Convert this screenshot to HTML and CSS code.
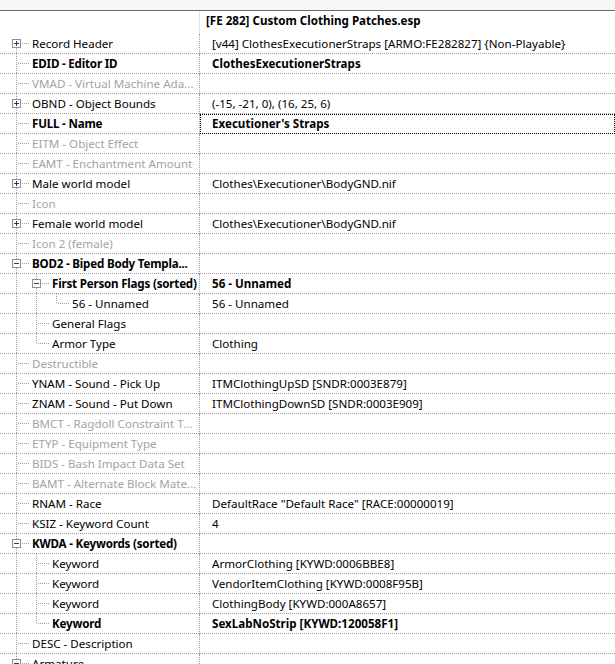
FILE: index.html
```html
<!DOCTYPE html>
<html>
<head>
<meta charset="utf-8">
<link rel="stylesheet" href="styles.css">
</head>
<body>
<svg class="defs" width="0" height="0" aria-hidden="true">
  <defs>
    <symbol id="v" viewBox="0 0 20 20">
      <line class="dl" x1="10.5" y1="0" x2="10.5" y2="20"/>
    </symbol>
    <symbol id="tee" viewBox="0 0 26 20">
      <line class="dl" x1="10.5" y1="0" x2="10.5" y2="20"/>
      <line class="dl" x1="12" y1="9.5" x2="24" y2="9.5"/>
    </symbol>
    <symbol id="ell" viewBox="0 0 26 20">
      <line class="dl" x1="10.5" y1="0" x2="10.5" y2="10"/>
      <line class="dl" x1="12" y1="9.5" x2="24" y2="9.5"/>
    </symbol>
    <symbol id="plus-first" viewBox="0 0 26 20">
      <line class="dl" x1="10.5" y1="14" x2="10.5" y2="20"/>
      <line class="dl" x1="16" y1="9.5" x2="24" y2="9.5"/>
      <rect class="box" x="6.5" y="5.5" width="8" height="8"/>
      <rect class="sign" x="8" y="9" width="5" height="1"/>
      <rect class="sign" x="10" y="7" width="1" height="5"/>
    </symbol>
    <symbol id="plus" viewBox="0 0 26 20">
      <line class="dl" x1="10.5" y1="0" x2="10.5" y2="5"/>
      <line class="dl" x1="10.5" y1="14" x2="10.5" y2="20"/>
      <line class="dl" x1="16" y1="9.5" x2="24" y2="9.5"/>
      <rect class="box" x="6.5" y="5.5" width="8" height="8"/>
      <rect class="sign" x="8" y="9" width="5" height="1"/>
      <rect class="sign" x="10" y="7" width="1" height="5"/>
    </symbol>
    <symbol id="minus" viewBox="0 0 26 20">
      <line class="dl" x1="10.5" y1="0" x2="10.5" y2="5"/>
      <line class="dl" x1="10.5" y1="14" x2="10.5" y2="20"/>
      <line class="dl" x1="16" y1="9.5" x2="24" y2="9.5"/>
      <rect class="box" x="6.5" y="5.5" width="8" height="8"/>
      <rect class="sign" x="8" y="9" width="5" height="1"/>
    </symbol>
  </defs>
</svg>

<div class="topbar"></div>
<div class="grid">
  <div class="head">
    <div class="hcell"></div>
    <div class="hval">[FE 282] Custom Clothing Patches.esp</div>
  </div>

  <div class="row"><div class="tree"><svg class="n"><use href="#plus-first"/></svg><span class="lbl">Record Header</span></div><div class="val">[v44] ClothesExecutionerStraps [ARMO:FE282827] {Non-Playable}</div></div>
  <div class="row"><div class="tree"><svg class="n"><use href="#tee"/></svg><span class="lbl b">EDID - Editor ID</span></div><div class="val b">ClothesExecutionerStraps</div></div>
  <div class="row"><div class="tree"><svg class="n"><use href="#tee"/></svg><span class="lbl g">VMAD - Virtual Machine Ada...</span></div><div class="val"></div></div>
  <div class="row"><div class="tree"><svg class="n"><use href="#plus"/></svg><span class="lbl">OBND - Object Bounds</span></div><div class="val">(-15, -21, 0), (16, 25, 6)</div></div>
  <div class="row"><div class="tree"><svg class="n"><use href="#tee"/></svg><span class="lbl b">FULL - Name</span></div><div class="val b focus">Executioner's Straps</div></div>
  <div class="row"><div class="tree"><svg class="n"><use href="#tee"/></svg><span class="lbl g">EITM - Object Effect</span></div><div class="val"></div></div>
  <div class="row"><div class="tree"><svg class="n"><use href="#tee"/></svg><span class="lbl g">EAMT - Enchantment Amount</span></div><div class="val"></div></div>
  <div class="row"><div class="tree"><svg class="n"><use href="#plus"/></svg><span class="lbl">Male world model</span></div><div class="val">Clothes\Executioner\BodyGND.nif</div></div>
  <div class="row"><div class="tree"><svg class="n"><use href="#tee"/></svg><span class="lbl g">Icon</span></div><div class="val"></div></div>
  <div class="row"><div class="tree"><svg class="n"><use href="#plus"/></svg><span class="lbl">Female world model</span></div><div class="val">Clothes\Executioner\BodyGND.nif</div></div>
  <div class="row"><div class="tree"><svg class="n"><use href="#tee"/></svg><span class="lbl g">Icon 2 (female)</span></div><div class="val"></div></div>
  <div class="row"><div class="tree"><svg class="n"><use href="#minus"/></svg><span class="lbl b">BOD2 - Biped Body Templa...</span></div><div class="val"></div></div>
  <div class="row"><div class="tree"><svg class="p"><use href="#v"/></svg><svg class="n"><use href="#minus"/></svg><span class="lbl b">First Person Flags (sorted)</span></div><div class="val b">56 - Unnamed</div></div>
  <div class="row"><div class="tree"><svg class="p"><use href="#v"/></svg><svg class="p"><use href="#v"/></svg><svg class="n"><use href="#ell"/></svg><span class="lbl">56 - Unnamed</span></div><div class="val">56 - Unnamed</div></div>
  <div class="row"><div class="tree"><svg class="p"><use href="#v"/></svg><svg class="n"><use href="#tee"/></svg><span class="lbl">General Flags</span></div><div class="val"></div></div>
  <div class="row"><div class="tree"><svg class="p"><use href="#v"/></svg><svg class="n"><use href="#ell"/></svg><span class="lbl">Armor Type</span></div><div class="val">Clothing</div></div>
  <div class="row"><div class="tree"><svg class="n"><use href="#tee"/></svg><span class="lbl g">Destructible</span></div><div class="val"></div></div>
  <div class="row"><div class="tree"><svg class="n"><use href="#tee"/></svg><span class="lbl">YNAM - Sound - Pick Up</span></div><div class="val">ITMClothingUpSD [SNDR:0003E879]</div></div>
  <div class="row"><div class="tree"><svg class="n"><use href="#tee"/></svg><span class="lbl">ZNAM - Sound - Put Down</span></div><div class="val">ITMClothingDownSD [SNDR:0003E909]</div></div>
  <div class="row"><div class="tree"><svg class="n"><use href="#tee"/></svg><span class="lbl g">BMCT - Ragdoll Constraint T...</span></div><div class="val"></div></div>
  <div class="row"><div class="tree"><svg class="n"><use href="#tee"/></svg><span class="lbl g">ETYP - Equipment Type</span></div><div class="val"></div></div>
  <div class="row"><div class="tree"><svg class="n"><use href="#tee"/></svg><span class="lbl g">BIDS - Bash Impact Data Set</span></div><div class="val"></div></div>
  <div class="row"><div class="tree"><svg class="n"><use href="#tee"/></svg><span class="lbl g">BAMT - Alternate Block Mate...</span></div><div class="val"></div></div>
  <div class="row"><div class="tree"><svg class="n"><use href="#tee"/></svg><span class="lbl">RNAM - Race</span></div><div class="val">DefaultRace "Default Race" [RACE:00000019]</div></div>
  <div class="row"><div class="tree"><svg class="n"><use href="#tee"/></svg><span class="lbl">KSIZ - Keyword Count</span></div><div class="val">4</div></div>
  <div class="row"><div class="tree"><svg class="n"><use href="#minus"/></svg><span class="lbl b">KWDA - Keywords (sorted)</span></div><div class="val"></div></div>
  <div class="row"><div class="tree"><svg class="p"><use href="#v"/></svg><svg class="n"><use href="#tee"/></svg><span class="lbl">Keyword</span></div><div class="val">ArmorClothing [KYWD:0006BBE8]</div></div>
  <div class="row"><div class="tree"><svg class="p"><use href="#v"/></svg><svg class="n"><use href="#tee"/></svg><span class="lbl">Keyword</span></div><div class="val">VendorItemClothing [KYWD:0008F95B]</div></div>
  <div class="row"><div class="tree"><svg class="p"><use href="#v"/></svg><svg class="n"><use href="#tee"/></svg><span class="lbl">Keyword</span></div><div class="val">ClothingBody [KYWD:000A8657]</div></div>
  <div class="row"><div class="tree"><svg class="p"><use href="#v"/></svg><svg class="n"><use href="#ell"/></svg><span class="lbl b">Keyword</span></div><div class="val b">SexLabNoStrip [KYWD:120058F1]</div></div>
  <div class="row"><div class="tree"><svg class="n"><use href="#tee"/></svg><span class="lbl">DESC - Description</span></div><div class="val"></div></div>
  <div class="row"><div class="tree"><svg class="n"><use href="#minus"/></svg><span class="lbl">Armature</span></div><div class="val"></div></div>
</div>
</body>
</html>
```

FILE: styles.css
```css
html, body {
  margin: 0;
  padding: 0;
  background: #ffffff;
}
body {
  font-family: "Noto Sans", "Open Sans", sans-serif;
  font-size: 11.6px;
  color: #000;
  overflow: hidden;
  height: 664px;
}
.defs {
  position: absolute;
  width: 0;
  height: 0;
  overflow: hidden;
}
.topbar {
  height: 10px;
  background: #f7f7f7;
  border-bottom: 1px solid #6b6b6b;
}
.grid {
  display: flex;
  flex-direction: column;
}
.head {
  display: grid;
  grid-template-columns: 200px 1fr;
  height: 23px;
}
.hcell {
  border-right: 1px solid #e3e3e3;
}
.hval {
  font-weight: bold;
  line-height: 20px;
  padding-left: 6px;
  white-space: nowrap;
}
.row {
  display: grid;
  grid-template-columns: 200px 1fr;
  height: 20px;
  background: linear-gradient(to right, #a0a0a0 50%, transparent 50%) 0 100% / 2px 1px repeat-x;
}
.tree {
  display: flex;
  align-items: flex-start;
  padding-left: 6px;
  border-right: 1px dotted #a0a0a0;
  overflow: hidden;
  white-space: nowrap;
}
.tree svg.p {
  width: 20px;
  height: 20px;
  flex: none;
}
.tree svg.n {
  width: 26px;
  height: 20px;
  flex: none;
}
.lbl {
  line-height: 19px;
  white-space: nowrap;
}
.lbl.b {
  letter-spacing: -0.2px;
}
.val {
  padding-left: 12px;
  line-height: 19px;
  white-space: nowrap;
  overflow: hidden;
}
.b { font-weight: bold; }
.g { color: #a3a3a3; }
.focus {
  outline: 1px dotted #000;
  outline-offset: -1px;
}
.dl {
  stroke: #a0a0a0;
  stroke-width: 1;
  stroke-dasharray: 1 1;
  shape-rendering: crispEdges;
  fill: none;
}
.box {
  fill: #fdfdfd;
  stroke: #8f8f8f;
  stroke-width: 1;
  shape-rendering: crispEdges;
}
.sign {
  fill: #243c7c;
  shape-rendering: crispEdges;
}
```
